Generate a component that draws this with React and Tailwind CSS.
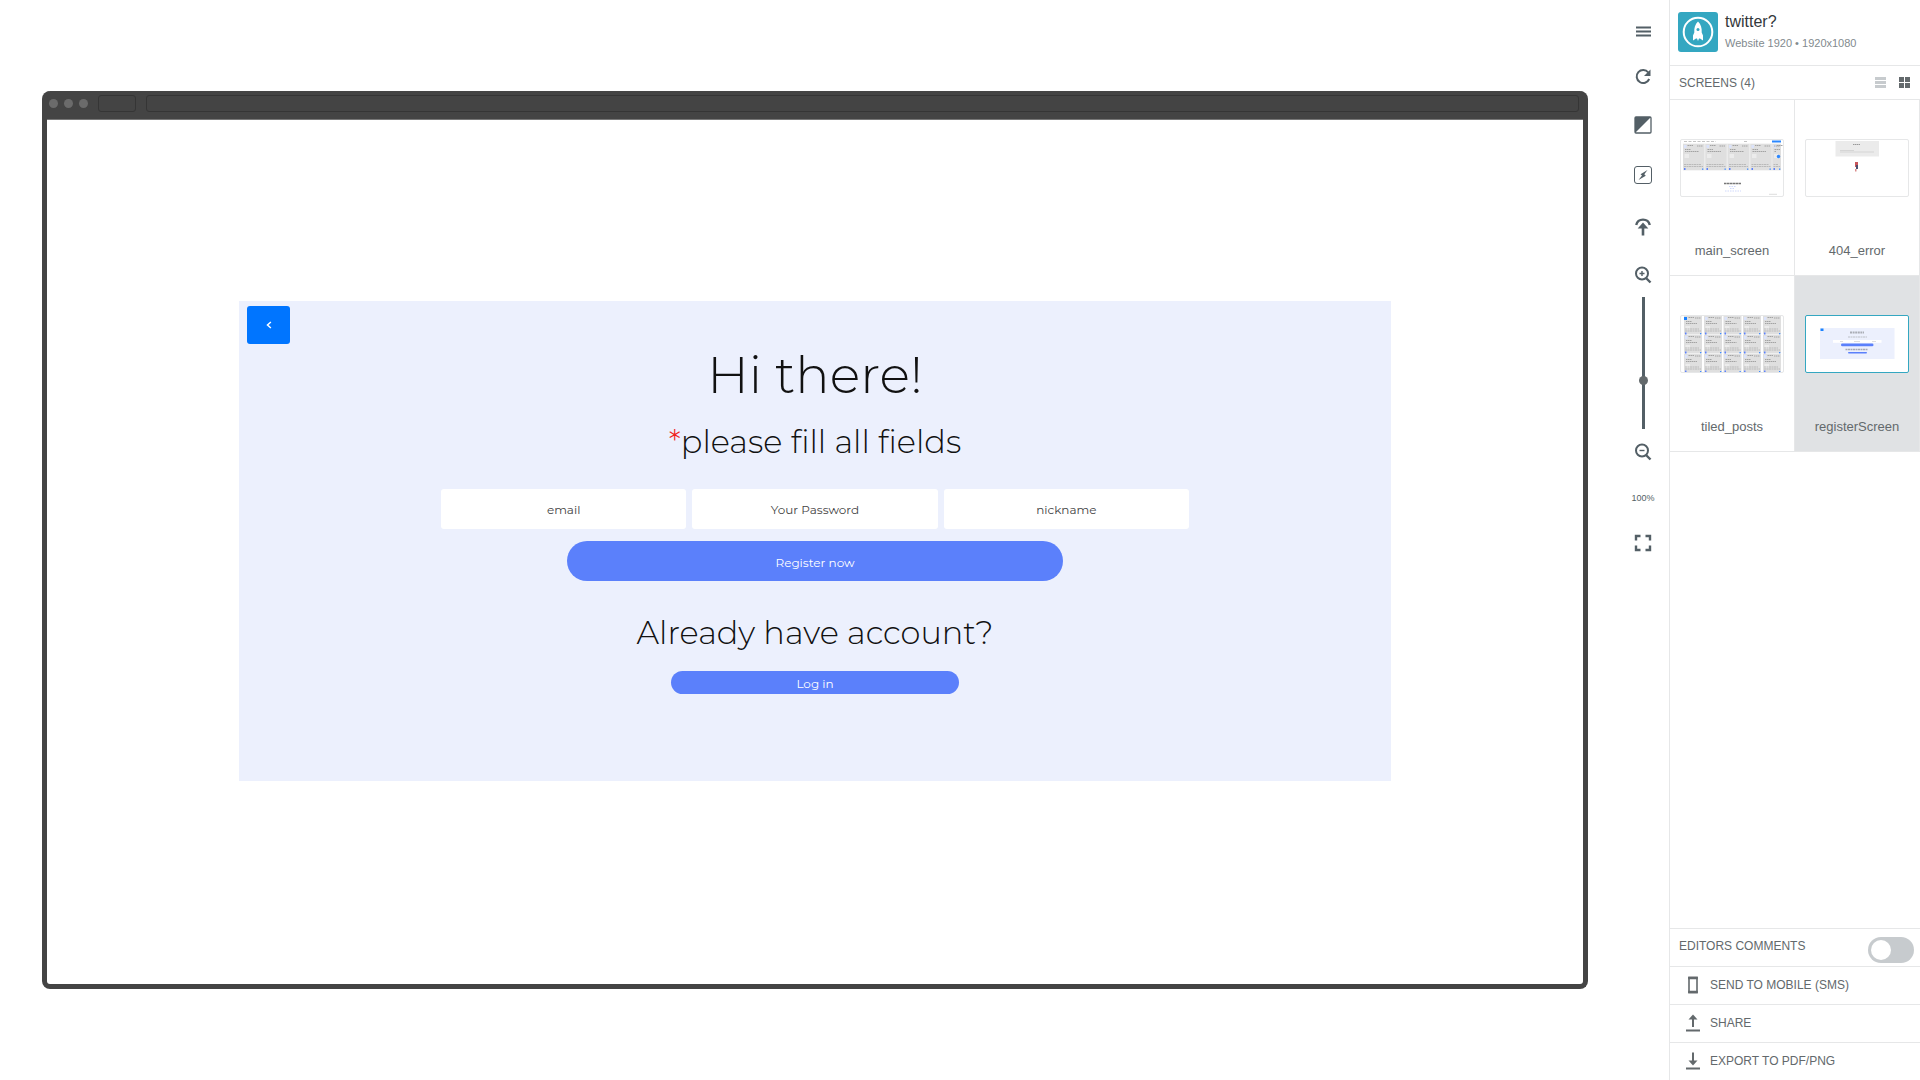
import React from "react";

const screens = [
  { name: "main_screen", Thumb: MainThumb },
  { name: "404_error", Thumb: ErrorThumb },
  { name: "tiled_posts", Thumb: TilesThumb },
  { name: "registerScreen", Thumb: RegisterThumb, active: true },
];

function Post({ x, y, w, h }) {
  return (
    <g transform={`translate(${x} ${y})`}>
      <rect width={w} height={h} fill="#dfdfdf" />
      <rect x="1" y="1" width="2.5" height="3" fill="#dbe3fb" />
      <path d={`M4.500 1.500H10M${w - 7} 2H${w - 1}M2 5.500H8M2 7.500H${w - 5}`} stroke="#a3a3a3" strokeWidth="1" strokeDasharray="1.500 .5" />
      <rect x="1.500" y="10" width="4.500" height="4" fill="#ececec" />
      <path d={`M1 ${h - 5.5}H${w - 3}M1 ${h - 3.5}H${w - 1}`} stroke="#b5b5b5" strokeWidth=".9" strokeDasharray="2 .5" />
      <rect x="1" y={h - 2} width="1.500" height="2" fill="#5b80fb" />
      <rect x={w - 2} y={h - 1.5} width="1.300" height="1.300" fill="#3d8bff" />
    </g>
  );
}

function MainThumb() {
  return (
    <svg viewBox="0 0 102 56" className="block w-full">
      <path d="M3 1.500H35M63 1.500H67" stroke="#c4c4c4" strokeDasharray="3 1.500" />
      <rect x="91" y="0.500" width="9" height="2" fill="#2b87ff" />
      <rect x="2" y="3.500" width="98" height="27" fill="#ebebeb" />
      {[2, 24.5, 47, 69.500].map((x) => <Post key={x} x={x} y={4} w={21} h={26} />)}
      <Post x={91.500} y={4} w={8.500} h={26} />
      <circle cx="97.500" cy="16.500" r="1.700" fill="#2b87ff" />
      <path d="M43 43.500H60" stroke="#777" strokeWidth="1.500" strokeDasharray="2.500 .4" />
      <path d="M48 46.500H55M49 48.500H54M44 51H60" stroke="#cfd8fb" strokeDasharray="1.500 1" />
      <path d="M88 54.300H96" stroke="#d4d4d4" strokeWidth=".8" />
    </svg>
  );
}

function ErrorThumb() {
  return (
    <svg viewBox="0 0 102 56" className="block w-full">
      <rect x="29.500" y="1" width="43.500" height="15.500" fill="#ebebeb" />
      <path d="M47 4.500H54" stroke="#999" strokeDasharray="1.500 .5" />
      <path d="M34 10.500H48M34 12H68" stroke="#cfcfcf" strokeWidth=".8" />
      <rect x="49" y="22" width="3" height="5" fill="#c8555b" />
      <rect x="50" y="25" width="2" height="4" fill="#4a4f70" />
      <rect x="49" y="29" width="1.500" height="2.500" fill="#d98b8b" />
    </svg>
  );
}

function TilesThumb() {
  return (
    <svg viewBox="0 0 102 56" className="block w-full">
      {[0, 19, 38].map((y) =>
        [3, 23, 42.500, 62, 82].map((x) => <Post key={`${x}-${y}`} x={x} y={y} w={18} h={18.500} />)
      )}
      <rect x="3" y="1" width="3" height="3" fill="#1a82ff" />
    </svg>
  );
}

function RegisterThumb() {
  return (
    <svg viewBox="0 0 102 56" className="block w-full">
      <rect x="14" y="12" width="74.500" height="31" fill="#ecf0fd" />
      <rect x="14.500" y="12.500" width="3" height="2.500" fill="#1a82ff" />
      <path d="M44 16.500H58" stroke="#aaadb5" strokeWidth="1.800" strokeDasharray="2 .6" />
      <path d="M42 21H61" stroke="#bcbfc8" strokeWidth="1.200" strokeDasharray="2 .5" />
      <rect x="27" y="24" width="48.500" height="2.800" fill="#fff" />
      <path d="M34 25.500H37M48 25.500H54M66 25.500H70" stroke="#d5d5d5" strokeWidth=".8" />
      <rect x="35" y="27.500" width="32.500" height="2.800" rx="1.400" fill="#5b80fb" />
      <path d="M39.500 33.500H62" stroke="#a6a9b4" strokeWidth="1.400" strokeDasharray="2 .5" />
      <rect x="42" y="36" width="19" height="1.600" rx=".8" fill="#5b80fb" />
    </svg>
  );
}

function Tool({ label, className, children }) {
  return (
    <button type="button" aria-label={label} className={`flex h-5 w-5 items-center justify-center ${className}`}>
      <svg viewBox="0 0 20 20" className="h-5 w-5" fill="none" stroke="#535f66" strokeWidth="2">
        {children}
      </svg>
    </button>
  );
}

function Toolbar() {
  return (
    <div className="flex w-[51px] shrink-0 flex-col items-center pr-px pt-[22px]">
      <Tool label="Menu">
        <path d="M3 5.500H18M3 9.500H18M3 13.500H18" strokeWidth="2" />
      </Tool>
      <Tool label="Reload" className="mt-[25px]">
        <path d="M15.300 5.500A6.500 6.500 0 1 0 16.200 12" />
        <path d="M17.500 2.500V9H11z" fill="#535f66" stroke="none" />
      </Tool>
      <Tool label="Contrast" className="mt-[28px]">
        <rect x="2" y="2" width="16" height="16" rx="1" strokeWidth="1.300" />
        <path d="M2 2H18L2 18z" fill="#535f66" stroke="none" />
      </Tool>
      <Tool label="Highlight hotspots" className="mt-[30px]">
        <rect x="1.500" y="1.500" width="17" height="17" rx="2.500" strokeWidth="1" />
        <path d="M14.500 5L7.500 9.200L9 10.600L5.500 15L12.800 10.800L11.300 9.300z" fill="#535f66" stroke="none" />
      </Tool>
      <Tool label="Scroll to top" className="mt-[31px]">
        <path d="M3.200 9A7 7 0 0 1 16.800 9" strokeWidth="2.400" />
        <path d="M10 19.500V9" strokeWidth="2.600" />
        <path d="M10 6.500L15.300 12.500H4.700z" fill="#535f66" stroke="none" />
      </Tool>
      <Tool label="Zoom in" className="mt-[29px]">
        <circle cx="9" cy="8.500" r="6" />
        <path d="M6.500 8.500H11.500M9 6V11" strokeWidth="1.400" />
        <path d="M13 13L17.500 17.500" strokeWidth="2.400" />
      </Tool>
      <div className="relative mt-3 h-[132px] w-[3px] bg-[#535f66]">
        <span className="absolute -left-[3px] top-[79px] h-[9px] w-[9px] rounded-full bg-[#63696c]" />
      </div>
      <Tool label="Zoom out" className="mt-[13px]">
        <circle cx="9" cy="8.500" r="6" />
        <path d="M6.500 8.500H11.500" strokeWidth="1.400" />
        <path d="M13 13L17.500 17.500" strokeWidth="2.400" />
      </Tool>
      <span className="mt-[28px] text-[9px] leading-4 text-[#535f66]">100%</span>
      <Tool label="Full screen" className="mt-[27px]">
        <path d="M3 7.500V3H7.500M12.500 3H17V7.500M17 12.500V17H12.500M7.500 17H3V12.500" strokeWidth="2.400" />
      </Tool>
    </div>
  );
}

function Field({ label, type }) {
  return (
    <input
      type={type}
      aria-label={label}
      placeholder={label}
      className="h-10 min-w-0 rounded-[3px] bg-white pt-px text-center text-xs text-[#444] placeholder:text-[#444]"
    />
  );
}

function RegisterPage() {
  return (
    <div className="relative mx-auto mt-[181px] flex h-[480px] w-3/4 flex-col items-center bg-[#ecf0fd] font-['Montserrat','Inter',sans-serif] text-[#111]">
      <button type="button" aria-label="Back" className="absolute left-2 top-[5px] flex h-[38px] w-[43px] items-center justify-center rounded-[3px] bg-[#0075ff]">
        <svg viewBox="0 0 8 10" className="h-[8px] w-[6px]" fill="none" stroke="#fff" strokeWidth="2">
          <path d="M6.500 1L2 5L6.500 9" />
        </svg>
      </button>
      <h1 className="mt-[42px] text-[51px] font-light leading-[64px]">Hi there!</h1>
      <h2 className="mt-[15px] text-[32px] font-light leading-[40px]">
        <span className="text-[#f02020]">*</span>please fill all fields
      </h2>
      <form className="mt-[27px] flex w-full flex-col items-center" onSubmit={(e) => e.preventDefault()}>
        <div className="grid w-full max-w-[748px] grid-cols-3 gap-[6px]">
          <Field label="email" type="email" />
          <Field label="Your Password" type="password" />
          <Field label="nickname" type="text" />
        </div>
        <button className="mt-3 h-10 w-full max-w-[496px] rounded-full bg-[#5b80fb] pt-[3px] text-xs text-white">Register now</button>
      </form>
      <h2 className="mt-[32px] text-[32px] font-light leading-[40px]">Already have account?</h2>
      <button type="button" className="mt-[18px] h-[23px] w-full max-w-[288px] rounded-full bg-[#5b80fb] pt-[2px] text-xs text-white">Log in</button>
    </div>
  );
}

function BrowserFrame() {
  return (
    <div className="w-full overflow-hidden rounded-lg border-x-[5px] border-b-[5px] border-[#444] bg-[#444]">
      <div className="flex h-[29px] items-start border-b border-[#777] pl-[2px] pr-1 pt-1">
        <div className="flex h-4 items-center gap-[6px]">
          <span className="h-[9px] w-[9px] rounded-full bg-[#6b6b6b]" />
          <span className="h-[9px] w-[9px] rounded-full bg-[#6b6b6b]" />
          <span className="h-[9px] w-[9px] rounded-full bg-[#6b6b6b]" />
        </div>
        <div className="ml-[10px] h-[17px] w-[38px] rounded-[3px] border border-[#353535]" />
        <div className="ml-[10px] h-[17px] flex-1 rounded-[3px] border border-[#353535]" />
      </div>
      <div className="aspect-video overflow-hidden bg-white">
        <RegisterPage />
      </div>
    </div>
  );
}

function ActionRow({ label, children }) {
  return (
    <button type="button" className="flex h-[38px] w-full items-center border-t border-[#e6e7e8] pb-[2px] pl-[14px] text-left text-xs text-[#63696c]">
      <svg viewBox="0 0 18 18" className="h-[18px] w-[18px]" fill="none" stroke="#63696c" strokeWidth="2">
        {children}
      </svg>
      <span className="ml-2">{label}</span>
    </button>
  );
}

function Sidebar() {
  return (
    <aside className="flex w-[251px] shrink-0 flex-col border-l border-[#e6e7e8] text-[#63696c]">
      <header className="flex h-[66px] items-start border-b border-[#e6e7e8] pl-2 pt-3">
        <svg viewBox="0 0 40 40" className="h-10 w-10">
          <rect width="40" height="40" rx="3" fill="#34a7c1" />
          <circle cx="20" cy="20" r="14.300" fill="none" stroke="#fff" strokeWidth="2" />
          <path d="M20 9.500C17 12.500 16 16 16.300 20.500L15 23.500V28.500L18 26.500H19L20 29L21 26.500H22L25 28.500V23.500L23.700 20.500C24 16 23 12.500 20 9.500z" fill="#fff" />
          <circle cx="20" cy="17.500" r="1.500" fill="#34a7c1" />
        </svg>
        <div className="ml-[7px] pt-px">
          <h1 className="text-base leading-[18px] text-[#33383b]">twitter?</h1>
          <p className="mt-1 text-[11px] leading-4 text-[#828a8e]">Website 1920 • 1920x1080</p>
        </div>
      </header>
      <div className="flex h-[34px] items-center border-b border-[#e6e7e8] pl-[9px] pr-[10px]">
        <h2 className="flex-1 text-xs">SCREENS (4)</h2>
        <button type="button" aria-label="List view">
          <svg viewBox="0 0 11 11" className="h-[11px] w-[11px]" fill="#c7cbce">
            <path d="M0 0H11V3H0zM0 4H11V7H0zM0 8H11V11H0z" />
          </svg>
        </button>
        <button type="button" aria-label="Grid view" className="ml-[13px]">
          <svg viewBox="0 0 11 11" className="h-[11px] w-[11px]" fill="#63696c">
            <path d="M0 0H5V5H0zM6 0H11V5H6zM0 6H5V11H0zM6 6H11V11H6z" />
          </svg>
        </button>
      </div>
      <div className="grid grid-cols-2">
        {screens.map(({ name, Thumb, active }) => (
          <button
            key={name}
            type="button"
            className={`flex h-[176px] flex-col items-center border-b border-r border-[#e6e7e8] pt-[39px] ${active ? "bg-[#e0e2e4]" : "bg-white"}`}
          >
            <span className={`block w-[104px] overflow-hidden rounded-[2px] border bg-white ${active ? "border-[#34a7c1]" : "border-[#e6e7e8]"}`}>
              <Thumb />
            </span>
            <span className="mt-[46px] text-[13px] leading-4">{name}</span>
          </button>
        ))}
      </div>
      <div className="mt-auto">
        <label className="flex h-[38px] items-start justify-between border-t border-[#e6e7e8] pl-[9px] pr-[6px] pt-2 text-xs">
          <span className="pt-px">EDITORS COMMENTS</span>
          <input
            type="checkbox"
            role="switch"
            className="h-[26px] w-[46px] appearance-none rounded-full bg-[#c7cbce] p-[3px] before:block before:h-5 before:w-5 before:rounded-full before:bg-white checked:before:ml-5"
          />
        </label>
        <ActionRow label="SEND TO MOBILE (SMS)">
          <rect x="5" y="1.500" width="8" height="15" strokeWidth="1.600" />
          <path d="M4.200 2H13.800M4.200 16H13.800" strokeWidth="2.500" />
        </ActionRow>
        <ActionRow label="SHARE">
          <path d="M2 16.500H16M9 13V4" />
          <path d="M9 0.500L13.500 5.500H4.500z" fill="#63696c" stroke="none" />
        </ActionRow>
        <ActionRow label="EXPORT TO PDF/PNG">
          <path d="M2 16.500H16M9 0.500V10" />
          <path d="M9 13.500L13.500 8.500H4.500z" fill="#63696c" stroke="none" />
        </ActionRow>
      </div>
    </aside>
  );
}

export default function App() {
  return (
    <div className="flex min-h-screen bg-white font-['Liberation_Sans',Arial,sans-serif]">
      <main className="flex min-w-0 flex-1 items-center pl-[42px] pr-[30px]">
        <BrowserFrame />
      </main>
      <Toolbar />
      <Sidebar />
    </div>
  );
}
